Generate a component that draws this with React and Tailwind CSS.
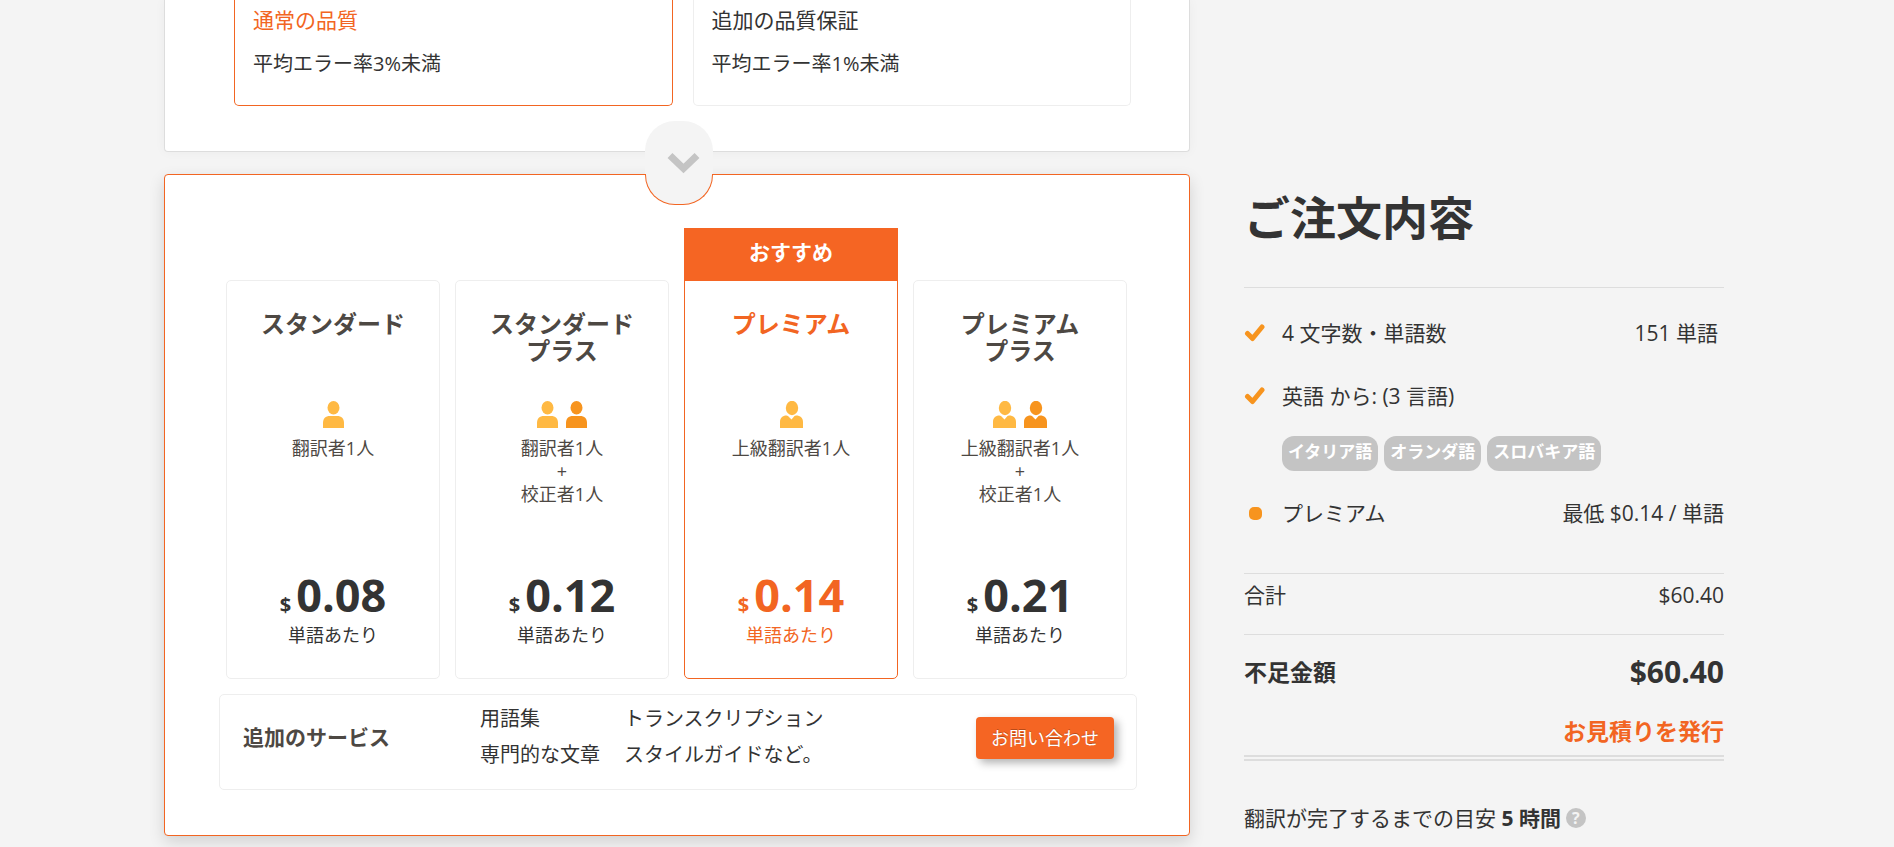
const plans = [
  { id: 'standard', title: ['スタンダード'], people: ['basic'], staff: ['翻訳者1人'], price: '0.08' },
  {
    id: 'standard-plus',
    title: ['スタンダード', 'プラス'],
    people: ['basic', 'basic'],
    staff: ['翻訳者1人', '+', '校正者1人'],
    price: '0.12',
  },
  { id: 'premium', title: ['プレミアム'], people: ['senior'], staff: ['上級翻訳者1人'], price: '0.14', recommended: true },
  {
    id: 'premium-plus',
    title: ['プレミアム', 'プラス'],
    people: ['senior', 'senior'],
    staff: ['上級翻訳者1人', '+', '校正者1人'],
    price: '0.21',
  },
]

const languages = ['イタリア語', 'オランダ語', 'スロバキア語']

function PersonIcon({ kind, color }) {
  if (kind === 'senior') {
    return (
      <svg width="23" height="27" viewBox="0 0 23 27" fill={color} aria-hidden="true">
        <ellipse cx="12" cy="7" rx="6.2" ry="7.2" />
        <path d="M0 27V21C0 17 2.5 14.5 6.5 14.5L8 15L11.5 18.5L14.5 15L16 14.5C20.5 14.5 23 17 23 21V27Z" />
      </svg>
    )
  }
  return (
    <svg width="21" height="27" viewBox="0 0 21 27" fill={color} aria-hidden="true">
      <ellipse cx="10.5" cy="6.8" rx="6" ry="6.8" />
      <path d="M0 27V22C0 17.5 2.5 15 7 15H14C18.5 15 21 17.5 21 22V27Z" />
    </svg>
  )
}

function CheckIcon() {
  return (
    <svg width="21" height="18" viewBox="0 0 21 18" fill="none" aria-hidden="true">
      <path d="M3.5 9.5L8.5 14.5L18 3" stroke="#f7941e" strokeWidth="5" strokeLinecap="round" strokeLinejoin="round" />
    </svg>
  )
}

function QualityCard({ title, detail, selected }) {
  return (
    <div
      className={`flex-1 rounded-b-[5px] border border-t-0 px-[18px] pb-[25px] ${
        selected ? 'border-[#f26522]' : 'border-[#eeeeee]'
      }`}
    >
      <p className={`pt-[3px] text-[21px] leading-[34px] ${selected ? 'text-[#f26522]' : ''}`}>{title}</p>
      <p className="pt-[10px] text-[20px] leading-[33px]">{detail}</p>
    </div>
  )
}

function PlanCard({ plan }) {
  const accent = plan.recommended
  return (
    <div
      className={`relative flex h-[399px] flex-1 flex-col items-center border pt-[29px] text-center ${
        accent ? 'rounded-b-[5px] border-[#f26522] text-[#f26522]' : 'rounded-[5px] border-[#eeeeee]'
      }`}
    >
      {accent && (
        <p className="absolute -inset-x-px -top-[53px] h-[53px] bg-[#f56523] text-[21px] leading-[48px] font-bold text-white">
          おすすめ
        </p>
      )}
      <h3 className={`h-[91px] text-[24px] leading-[27px] font-bold ${accent ? '' : 'text-[#4d4843]'}`}>
        {plan.title.map((line) => (
          <span key={line} className="block">{line}</span>
        ))}
      </h3>
      <div className="flex h-[27px] gap-[8px]">
        {plan.people.map((kind, i) => (
          <PersonIcon key={i} kind={kind} color={i === 0 ? '#ffb943' : '#f7941e'} />
        ))}
      </div>
      <div className="mt-[9px] flex-1 text-[18px] leading-[23px] text-[#4d4843]">
        {plan.staff.map((line) => (
          <p key={line}>{line}</p>
        ))}
      </div>
      <p className="flex items-baseline gap-[5px] font-bold">
        <span className="text-[20px] leading-[36px]">$</span>
        <span className="text-[45px] leading-[36px]">{plan.price}</span>
      </p>
      <p className="mb-[31px] text-[18px] leading-[24px]">単語あたり</p>
    </div>
  )
}

function ExtraServices() {
  return (
    <div className="mt-[15px] flex h-[96px] items-start rounded-[5px] border border-[#eeeeee] pr-[22px] pl-[23px]">
      <h3 className="w-[237px] pt-[26px] text-[21px] leading-[33px] font-bold text-[#4d4843]">追加のサービス</h3>
      <ul className="grid flex-1 grid-cols-[144px_1fr] pt-[6px] text-[20px] leading-[36px] whitespace-nowrap">
        <li>用語集</li>
        <li>トランスクリプション</li>
        <li>専門的な文章</li>
        <li>スタイルガイドなど。</li>
      </ul>
      <button
        type="button"
        className="mt-[22px] h-[42px] cursor-pointer rounded-[4px] bg-[#f56523] px-[15px] text-[18px] text-white shadow-[4px_4px_8px_rgba(0,0,0,0.3)] text-shadow-[0_-1px_0_rgba(0,0,0,0.25)]"
      >
        お問い合わせ
      </button>
    </div>
  )
}

function OrderSummary() {
  return (
    <aside className="w-[480px] flex-shrink-0 pt-[185px] text-[21px] leading-[32px]">
      <h2 className="border-b border-[#dddddd] pb-[38px] text-[46px] leading-[64px] font-bold">ご注文内容</h2>

      <ul className="border-b border-[#dddddd] pt-[29px] pb-[44px]">
        <li className="flex items-center">
          <span className="w-[38px]"><CheckIcon /></span>
          <span className="flex-1">4 文字数・単語数</span>
          <span className="mr-[6px]">151 単語</span>
        </li>
        <li className="mt-[31px] flex items-center">
          <span className="w-[38px]"><CheckIcon /></span>
          <span>英語 から: (3 言語)</span>
        </li>
        <li className="mt-[24px] ml-[38px] flex gap-[6px]">
          {languages.map((language) => (
            <span
              key={language}
              className="rounded-[12px] bg-[#c4c4c4] px-[6px] pb-[3px] text-[17px] leading-[32px] font-bold text-white"
            >
              {language}
            </span>
          ))}
        </li>
        <li className="mt-[26px] flex items-center">
          <span className="w-[38px]">
            <span className="ml-[5px] block size-[13px] rounded-[5px] bg-[#f7941e]" />
          </span>
          <span className="flex-1">プレミアム</span>
          <span>最低 $0.14 / 単語</span>
        </li>
      </ul>

      <div className="flex justify-between border-b border-[#dddddd] pt-[5px] pb-[23px]">
        <span>合計</span>
        <span>$60.40</span>
      </div>

      <div className="border-b-6 border-double border-[#dddddd] pt-[16px] pb-[6px] font-bold">
        <div className="flex items-center justify-between">
          <span className="text-[23px] leading-[42px]">不足金額</span>
          <span className="text-[30px] leading-[42px]">$60.40</span>
        </div>
        <div className="mt-[20px] text-right text-[23px] leading-[36px]">
          <a href="#quote" className="text-[#f26522]">お見積りを発行</a>
        </div>
      </div>

      <p className="flex items-center gap-[5px] pt-[41px]">
        <span>
          翻訳が完了するまでの目安 <strong>5 時間</strong>
        </span>
        <span className="size-[20px] rounded-full bg-[#c4c4c4] text-center text-[16px] leading-[20px] font-bold text-[#f4f4f4]">
          ?
        </span>
      </p>
    </aside>
  )
}

export default function App() {
  return (
    <div className="flex min-h-screen gap-[54px] overflow-hidden bg-[#f4f4f4] pr-[170px] pl-[164px] font-['Open_Sans','Noto_Sans_CJK_JP',sans-serif] text-[#333333]">
      <main className="min-w-0 flex-1">
        <section className="flex gap-[20px] rounded-b-[4px] border border-t-0 border-[#dddddd] bg-white pr-[58px] pb-[45px] pl-[69px] shadow-[0_0_12px_rgba(0,0,0,0.04)]">
          <QualityCard title="通常の品質" detail="平均エラー率3%未満" selected />
          <QualityCard title="追加の品質保証" detail="平均エラー率1%未満" />
        </section>

        <section className="relative mt-[22px] rounded-[4px] border border-[#f26522] bg-white pt-[105px] pr-[52px] pb-[45px] pl-[54px] shadow-[0_6px_16px_rgba(0,0,0,0.14)]">
          {/* step connector between the two panels */}
          <div className="absolute -top-[54px] left-1/2 -ml-[32px] flex w-[68px] flex-col">
            <div className="h-[53px] rounded-t-[30px] bg-[#f4f4f4]" />
            <div className="h-[31px] rounded-b-[30px] border border-t-0 border-[#f26522] bg-[#f4f4f4]" />
            <svg
              className="absolute top-[31px] left-[22px]"
              width="33"
              height="22"
              viewBox="0 0 33 22"
              fill="none"
              aria-hidden="true"
            >
              <path d="M3 3.5L16.5 16.5L30 3.5" stroke="#c4c4c4" strokeWidth="7" />
            </svg>
          </div>
          <div className="flex gap-[15px] pr-[10px] pl-[7px]">
            {plans.map((plan) => (
              <PlanCard key={plan.id} plan={plan} />
            ))}
          </div>
          <ExtraServices />
        </section>
      </main>
      <OrderSummary />
    </div>
  )
}
